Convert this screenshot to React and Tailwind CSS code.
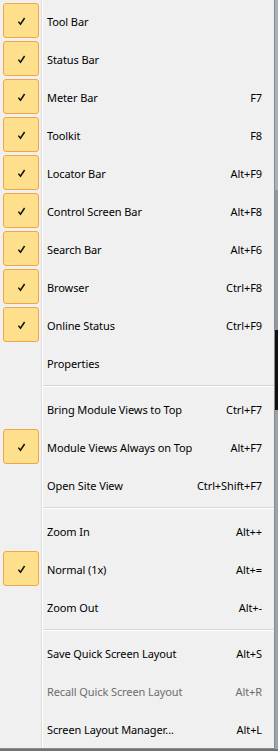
import React from "react";

const groups = [
  [
    { label: "Tool Bar", checked: true },
    { label: "Status Bar", checked: true },
    { label: "Meter Bar", checked: true, key: "F7" },
    { label: "Toolkit", checked: true, key: "F8" },
    { label: "Locator Bar", checked: true, key: "Alt+F9" },
    { label: "Control Screen Bar", checked: true, key: "Alt+F8" },
    { label: "Search Bar", checked: true, key: "Alt+F6" },
    { label: "Browser", checked: true, key: "Ctrl+F8" },
    { label: "Online Status", checked: true, key: "Ctrl+F9" },
    { label: "Properties" },
  ],
  [
    { label: "Bring Module Views to Top", key: "Ctrl+F7" },
    { label: "Module Views Always on Top", checked: true, key: "Alt+F7" },
    { label: "Open Site View", key: "Ctrl+Shift+F7" },
  ],
  [
    { label: "Zoom In", key: "Alt++" },
    { label: "Normal (1x)", checked: true, key: "Alt+=" },
    { label: "Zoom Out", key: "Alt+-" },
  ],
  [
    { label: "Save Quick Screen Layout", key: "Alt+S" },
    { label: "Recall Quick Screen Layout", key: "Alt+R", disabled: true },
    { label: "Screen Layout Manager...", key: "Alt+L" },
  ],
];

function Check() {
  return (
    <svg width="9" height="9" viewBox="0 0 9 9" className="block mt-[1px]">
      <path d="M1.4 4.6 L3.5 7.2 L7.6 1" fill="none" stroke="#111" strokeWidth="1.5" strokeLinejoin="miter" />
    </svg>
  );
}

function Item({ item }) {
  return (
    <div className="flex h-[38px]">
      <div className="w-[41px] shrink-0 pl-[3px] pt-[2px]">
        {item.checked && (
          <div className="w-[36px] h-[35px] rounded-[3px] border border-[#f4a443] bg-[#fee08c] flex items-center justify-center">
            <Check />
          </div>
        )}
      </div>
      <div className="w-px bg-[#dcdcdc]" />
      <div className="w-px bg-white" />
      <div
        className={
          "flex-1 flex items-center justify-between pl-[4px] pr-[12px] pt-[3px] " +
          (item.disabled ? "text-[#6d6d6d]" : "text-[#000]")
        }
      >
        <span>{item.label}</span>
        {item.key && <span>{item.key}</span>}
      </div>
    </div>
  );
}

function Separator() {
  return (
    <div className="flex h-[8px]">
      <div className="w-[41px] shrink-0" />
      <div className="w-px bg-[#dcdcdc]" />
      <div className="w-px bg-white" />
      <div className="flex-1 flex flex-col pt-[4px]">
        <div className="h-px bg-[#d7d7d7]" />
        <div className="h-px bg-white" />
      </div>
    </div>
  );
}

export default function App() {
  return (
    <div
      className="w-[278px] h-[751px] bg-[#6f7478] flex flex-col overflow-hidden"
      style={{ fontFamily: '"Noto Sans", sans-serif' }}
    >
      <div className="flex">
        <div className="w-[275px] bg-[#f0f0f0] border-r border-b border-[#8c8c8c] pt-px pb-px text-[11px] leading-none tracking-[-0.1px]">
          {groups.map((g, gi) => (
            <React.Fragment key={gi}>
              {gi > 0 && <Separator />}
              {g.map((it) => (
                <Item key={it.label} item={it} />
              ))}
            </React.Fragment>
          ))}
        </div>
        <div className="flex-1 flex flex-col">
          <div className="h-[190px] bg-[#a9b1bb]" />
          <div className="h-[140px] bg-[#8e98a4]" />
          <div className="h-[80px] bg-[#111]" />
          <div className="flex-1 bg-[#9aa3ad]" />
        </div>
      </div>
    </div>
  );
}
